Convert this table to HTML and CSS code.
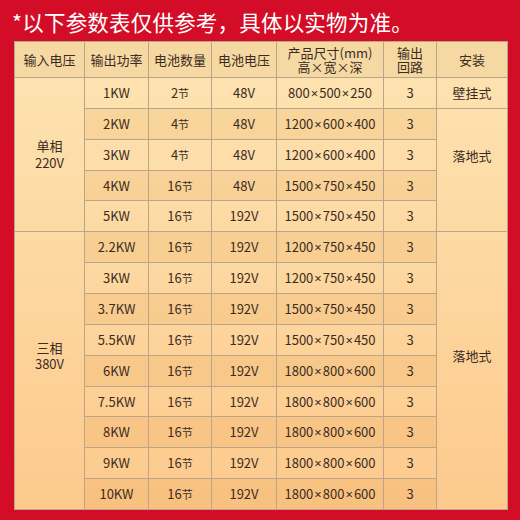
FILE: index.html
```html
<!DOCTYPE html>
<html lang="zh">
<head>
<meta charset="utf-8">
<link rel="stylesheet" href="styles.css">
</head>
<body>
<div class="page">
  <h1 class="title">*以下参数表仅供参考，具体以实物为准。</h1>
  <table class="spec">
    <colgroup>
      <col class="c1"><col class="c2"><col class="c3"><col class="c4"><col class="c5"><col class="c6"><col class="c7">
    </colgroup>
    <thead>
      <tr>
        <th>输入电压</th>
        <th>输出功率</th>
        <th>电池数量</th>
        <th>电池电压</th>
        <th class="two">产品尺寸(mm)<br>高×宽×深</th>
        <th class="two">输出<br>回路</th>
        <th>安装</th>
      </tr>
    </thead>
    <tbody>
      <tr>
        <td rowspan="5" class="span phase1">单相<br>220V</td>
        <td>1KW</td><td>2<span class="u">节</span></td><td>48V</td><td>800<span class="x">×</span>500<span class="x">×</span>250</td><td>3</td>
        <td class="span">壁挂式</td>
      </tr>
      <tr class="dk">
        <td>2KW</td><td>4<span class="u">节</span></td><td>48V</td><td>1200<span class="x">×</span>600<span class="x">×</span>400</td><td>3</td>
        <td rowspan="4" class="span up">落地式</td>
      </tr>
      <tr><td>3KW</td><td>4<span class="u">节</span></td><td>48V</td><td>1200<span class="x">×</span>600<span class="x">×</span>400</td><td>3</td></tr>
      <tr class="dk"><td>4KW</td><td>16<span class="u">节</span></td><td>48V</td><td>1500<span class="x">×</span>750<span class="x">×</span>450</td><td>3</td></tr>
      <tr><td>5KW</td><td>16<span class="u">节</span></td><td>192V</td><td>1500<span class="x">×</span>750<span class="x">×</span>450</td><td>3</td></tr>
      <tr class="dk">
        <td rowspan="9" class="span up">三相<br>380V</td>
        <td>2.2KW</td><td>16<span class="u">节</span></td><td>192V</td><td>1200<span class="x">×</span>750<span class="x">×</span>450</td><td>3</td>
        <td rowspan="9" class="span up">落地式</td>
      </tr>
      <tr><td>3KW</td><td>16<span class="u">节</span></td><td>192V</td><td>1200<span class="x">×</span>750<span class="x">×</span>450</td><td>3</td></tr>
      <tr class="dk"><td>3.7KW</td><td>16<span class="u">节</span></td><td>192V</td><td>1500<span class="x">×</span>750<span class="x">×</span>450</td><td>3</td></tr>
      <tr><td>5.5KW</td><td>16<span class="u">节</span></td><td>192V</td><td>1500<span class="x">×</span>750<span class="x">×</span>450</td><td>3</td></tr>
      <tr class="dk"><td>6KW</td><td>16<span class="u">节</span></td><td>192V</td><td>1800<span class="x">×</span>800<span class="x">×</span>600</td><td>3</td></tr>
      <tr><td>7.5KW</td><td>16<span class="u">节</span></td><td>192V</td><td>1800<span class="x">×</span>800<span class="x">×</span>600</td><td>3</td></tr>
      <tr class="dk"><td>8KW</td><td>16<span class="u">节</span></td><td>192V</td><td>1800<span class="x">×</span>800<span class="x">×</span>600</td><td>3</td></tr>
      <tr><td>9KW</td><td>16<span class="u">节</span></td><td>192V</td><td>1800<span class="x">×</span>800<span class="x">×</span>600</td><td>3</td></tr>
      <tr class="dk"><td>10KW</td><td>16<span class="u">节</span></td><td>192V</td><td>1800<span class="x">×</span>800<span class="x">×</span>600</td><td>3</td></tr>
    </tbody>
  </table>
</div>
</body>
</html>
```

FILE: styles.css
```css
html, body {
  margin: 0;
  padding: 0;
  background: #d30d27;
}
.page {
  width: 520px;
  height: 520px;
  box-sizing: border-box;
  padding: 11px 0 0 14px;
  font-family: "Noto Sans CJK SC", "Noto Sans", sans-serif;
  color: #3b2c1e;
}
.title {
  margin: 0 0 8px -2px;
  font-size: 21.5px;
  line-height: 22px;
  font-weight: 400;
  color: #ffffff;
  letter-spacing: 0.2px;
  white-space: nowrap;
}
.spec {
  border-collapse: collapse;
  table-layout: fixed;
  width: 493px;
  font-size: 13px;
  background: linear-gradient(180deg, #fde4b2 0%, #fdd7a0 50%, #fdc98c 100%);
}
.c1 { width: 70px; }
.c2 { width: 64px; }
.c3 { width: 63px; }
.c4 { width: 65px; }
.c5 { width: 107px; }
.c6 { width: 53px; }
.c7 { width: 71px; }
.spec th,
.spec td {
  border: 1px solid #bba58a;
  padding: 0;
  text-align: center;
  vertical-align: middle;
  font-weight: 400;
  line-height: 16px;
}
.spec thead tr {
  height: 36px;
  background: #f6d8a3;
}
.spec th.two {
  line-height: 14px;
}
.spec tbody tr {
  height: 30.86px;
}
.spec tr.dk td:not(.span) {
  background: rgba(214, 140, 50, 0.13);
}
.spec td.span {
  background: transparent;
}
.spec td.up {
  padding-bottom: 29px;
}
.spec td.phase1 {
  padding-bottom: 2px;
  line-height: 17px;
}
.u {
  font-size: 11px;
}
.x {
  font-family: "Noto Sans", "DejaVu Sans", sans-serif;
  padding: 0 1px;
}
```
